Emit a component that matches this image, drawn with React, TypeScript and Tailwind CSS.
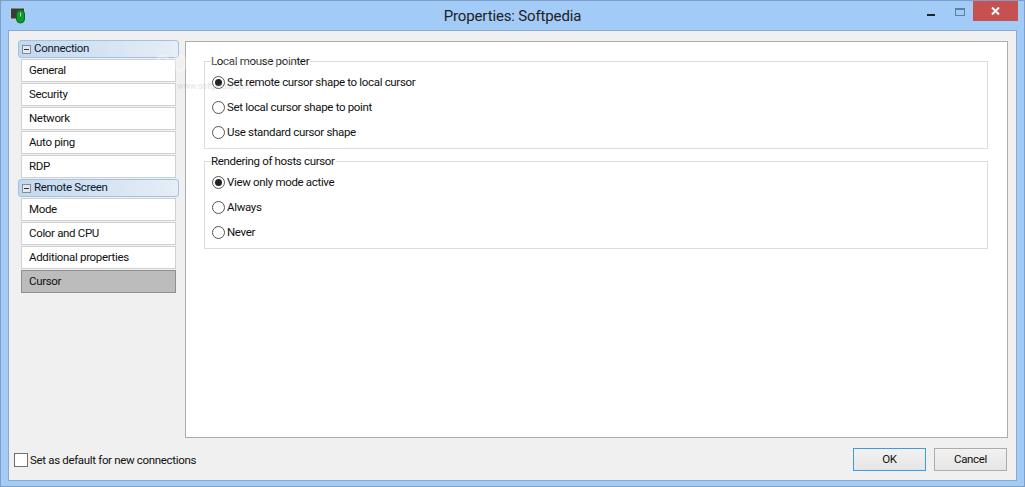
import React from 'react';

const font = { connection: ['General', 'Security', 'Network', 'Auto ping', 'RDP'], remote: ['Mode', 'Color and CPU', 'Additional properties', 'Cursor'] };

function GroupHeader({ label }: { label: string }) {
  return (
    <div className="h-[18px] w-[161px] -ml-[3px] flex items-center pl-[3px] rounded-[3px] border border-[#9fc3e8] bg-gradient-to-r from-[#c4d8ec] to-[#e6eef6]">
      <span className="w-[9px] h-[9px] border border-[#7f8f9f] bg-[#e4e9ef] flex items-center justify-center">
        <span className="w-[5px] h-px bg-[#333]" />
      </span>
      <span className="ml-[3px] pb-px text-[#0a1a33]">{label}</span>
    </div>
  );
}

function NavItem({ label, active }: { label: string; active?: boolean }) {
  return (
    <div
      className={`h-[23px] w-[155px] flex items-center pl-[7px] border ${
        active ? 'bg-[#bcbcbc] border-[#8f8f8f]' : 'bg-white border-[#d0d0d0]'
      }`}
    >
      {label}
    </div>
  );
}

function Radio({ label, checked }: { label: string; checked?: boolean }) {
  return (
    <div className="h-[25px] flex items-center">
      <span className="w-[13px] h-[13px] ml-[7px] rounded-full border border-[#555] bg-white flex items-center justify-center">
        {checked && <span className="w-[7px] h-[7px] rounded-full bg-[#222]" />}
      </span>
      <span className="ml-[2px]">{label}</span>
    </div>
  );
}

function Group({ title, options, className }: { title: string; options: string[]; className?: string }) {
  return (
    <div className={`relative w-[784px] h-[88px] border border-[#dcdcdc] pt-[8px] ${className ?? ''}`}>
      <span className="absolute left-[6px] -top-[9px] bg-white pr-px leading-[16px]">{title}</span>
      {options.map((o, i) => (
        <Radio key={o} label={o} checked={i === 0} />
      ))}
    </div>
  );
}

export default function App() {
  return (
    <div
      className="w-[1025px] h-[487px] flex flex-col bg-[#a3cbf7] border border-[#7d9fc9] text-[11.5px] tracking-[-0.33px] text-[#111] overflow-hidden"
      style={{ fontFamily: 'Roboto, "Noto Sans", sans-serif' }}
    >
      {/* Title bar */}
      <div className="h-[29px] shrink-0 flex items-start">
        <div className="w-[200px] pl-[9px] pt-[6px]">
          <svg width="17" height="18" viewBox="0 0 17 18">
            <rect x="0.5" y="1" width="14" height="11" fill="#3a3a3a" stroke="#c8c8c8" />
            <rect x="6.5" y="3" width="8" height="13" rx="4" fill="#0d9a2c" stroke="#0a6b1e" />
            <rect x="9.5" y="5" width="2" height="5" rx="1" fill="#9fe8ad" stroke="#0a5c1a" strokeWidth="0.5" />
          </svg>
        </div>
        <div className="flex-1 text-center text-[15px] tracking-[-0.15px] leading-[30px] text-[#222]">Properties: Softpedia</div>
        <div className="w-[200px] flex justify-end items-start pr-[6px]">
          <span className="w-[8px] h-[2px] mt-[13px] bg-[#222]" />
          <span className="w-[10px] h-[8px] ml-[20px] mt-[7px] border border-[#5f7f9f] border-t-2" />
          <div className="w-[45px] h-[20px] ml-[8px] bg-[#c75050] flex items-center justify-center">
            <svg width="9" height="8" viewBox="0 0 9 8">
              <path d="M1 0.5 L8 7.5 M8 0.5 L1 7.5" stroke="#fff" strokeWidth="2" />
            </svg>
          </div>
        </div>
      </div>

      {/* Client area */}
      <div className="relative flex-1 ml-[7px] mr-[7px] mb-[7px] bg-[#f0f0f0] border border-[#8aa9cc] pl-[9px] pt-[9px] flex flex-col">
        <div className="flex flex-1 min-h-0">
          <div className="w-[160px] ml-[3px] flex flex-col gap-px">
            <GroupHeader label="Connection" />
            <div className="flex flex-col gap-px">
              {font.connection.map((l) => (
                <NavItem key={l} label={l} />
              ))}
            </div>
            <GroupHeader label="Remote Screen" />
            <div className="flex flex-col gap-px">
              {font.remote.map((l) => (
                <NavItem key={l} label={l} active={l === 'Cursor'} />
              ))}
            </div>
          </div>
          <div className="w-[823px] h-[397px] ml-[4px] mt-px bg-white border border-[#acacac] pl-[18px] pt-[19px] flex flex-col gap-[12px]">
            <Group title="Local mouse pointer" options={['Set remote cursor shape to local cursor', 'Set local cursor shape to point', 'Use standard cursor shape']} />
            <Group title="Rendering of hosts cursor" options={['View only mode active', 'Always', 'Never']} />
          </div>
        </div>
        <div className="h-[42px] shrink-0 flex items-start">
          <span className="w-[14px] h-[14px] -ml-[4px] mt-[15px] border border-[#707070] bg-white" />
          <span className="ml-[2px] mt-[13px] leading-[18px]">Set as default for new connections</span>
          <div className="ml-auto mr-[9px] mt-[10px] flex gap-[8px]">
            <button className="w-[73px] h-[23px] border border-[#3d9be9] bg-gradient-to-b from-[#f2f2f2] to-[#e5e5e5]">OK</button>
            <button className="w-[73px] h-[23px] border border-[#acacac] bg-gradient-to-b from-[#f2f2f2] to-[#e5e5e5]">Cancel</button>
          </div>
        </div>

        {/* Softpedia watermark */}
        <div className="absolute left-[146px] top-[19px] text-[24px] leading-[28px] tracking-[2px] text-white/30 font-bold pointer-events-none">SOFTPEDIA</div>
        <div className="absolute left-[168px] top-[49px] text-[9px] text-[#999]/30 pointer-events-none">www.softpedia.com</div>
      </div>
    </div>
  );
}
